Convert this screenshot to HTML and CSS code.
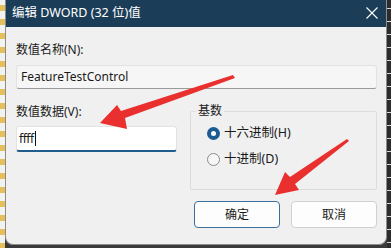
FILE: index.html
```html
<!DOCTYPE html>
<html lang="zh-CN">
<head>
<meta charset="utf-8">
<title>编辑 DWORD (32 位)值</title>
<link rel="stylesheet" href="styles.css">
</head>
<body>
<div class="screen">
  <div class="strip-left"></div>
  <div class="dialog">
    <div class="titlebar">
      <span class="title">编辑 DWORD (32 位)值</span>
      <svg class="close" width="12" height="12" viewBox="0 0 12 12"><path d="M0.5 0.5 L11.5 11.5 M11.5 0.5 L0.5 11.5" stroke="#ffffff" stroke-width="1.1" fill="none"/></svg>
    </div>
    <div class="content">
      <div class="label">数值名称(N):</div>
      <div class="field field-readonly">FeatureTestControl</div>
      <div class="row">
        <div class="col-left">
          <div class="label">数值数据(V):</div>
          <div class="field field-edit">ffff<span class="caret"></span></div>
        </div>
        <fieldset class="group">
          <legend class="legend">基数</legend>
          <div class="radio"><span class="dot dot-on"></span><span>十六进制(H)</span></div>
          <div class="radio"><span class="dot"></span><span>十进制(D)</span></div>
        </fieldset>
      </div>
      <div class="buttons">
        <div class="btn btn-primary">确定</div>
        <div class="btn">取消</div>
      </div>
    </div>
  </div>
  <div class="strip-right"></div>
  <svg class="arrows" width="391" height="248" viewBox="0 0 391 248">
    <polygon fill="#ea2f2f" points="100,123 117,105 121,111 233,75 235,78 125,118 127,129"/>
    <polygon fill="#ea2f2f" points="275,195 285,172 290,177 347,139 349,141 295,184 299,190"/>
  </svg>
</div>
</body>
</html>
```

FILE: styles.css
```css
* { box-sizing: border-box; }
html, body { margin: 0; padding: 0; }
body {
  width: 391px;
  height: 248px;
  overflow: hidden;
  font-family: "Segoe UI", "Noto Sans", "Noto Sans CJK SC", sans-serif;
  font-size: 12px;
  line-height: 16px;
  color: #1a1a1a;
  background: #3a3a3a;
}
.screen {
  position: relative;
  display: flex;
  width: 391px;
  height: 248px;
}
.strip-left {
  width: 5px;
  height: 248px;
  background:
    repeating-linear-gradient(to bottom, #f2f2f2 0 5px, #e5bf5c 5px 11px, #f2f2f2 11px 14px);
}
.strip-right {
  width: 4px;
  height: 248px;
  background:
    repeating-linear-gradient(to bottom, #2c2c2c 0 8px, #d8d8d8 8px 9px, #2c2c2c 9px 13px);
}
.dialog {
  width: 382px;
  height: 245px;
  background: #f0f0f0;
  border: 1px solid #8c8c8c;
  border-top: none;
  border-radius: 0 0 8px 8px;
  display: flex;
  flex-direction: column;
  overflow: hidden;
}
.titlebar {
  height: 27px;
  background: #1c3d57;
  color: #ffffff;
  display: flex;
  align-items: center;
  justify-content: space-between;
  padding: 0 8px 1px 7px;
  margin: 0 -1px;
}
.title { font-size: 12.5px; }
.close { margin-right: 1px; }
.content {
  padding: 15px 9px 0 10px;
  display: flex;
  flex-direction: column;
}
.label { height: 16px; }
.field {
  height: 24px;
  margin-top: 7px;
  padding: 0 4px;
  display: flex;
  align-items: center;
  border: 1px solid #e2e2e2;
  border-radius: 3px;
}
.field-readonly {
  background: #f6f6f6;
  border-bottom-color: #9a9a9a;
}
.row {
  display: flex;
  gap: 13px;
  margin-top: 15px;
}
.col-left { width: 161px; }
.field-edit {
  height: 26px;
  margin-top: 6px;
  background: #ffffff;
  border-bottom: 2px solid #1f5e8c;
  padding-left: 2px;
  letter-spacing: -0.5px;
}
.caret {
  display: inline-block;
  width: 1px;
  height: 15px;
  background: #111;
  margin-left: 1px;
}
.group {
  width: 187px;
  height: 86px;
  margin: 0;
  padding: 7px 5px 0 16px;
  border: 1px solid #dcdcdc;
  border-radius: 2px;
}
.legend {
  padding: 0 2px;
  margin-left: -11px;
  line-height: 14px;
}
.radio {
  display: flex;
  align-items: center;
  gap: 4px;
  height: 16px;
  margin-bottom: 10px;
  font-size: 12.5px;
}
.dot {
  width: 13px;
  height: 13px;
  border-radius: 50%;
  border: 1px solid #8a8a8a;
  background: #f7f7f7;
}
.dot-on {
  border: 4px solid #1d5c93;
  background: #ffffff;
}
.buttons {
  display: flex;
  justify-content: flex-end;
  gap: 11px;
  margin-top: 11px;
}
.btn {
  width: 86px;
  height: 27px;
  display: flex;
  align-items: center;
  justify-content: center;
  background: #fdfdfd;
  border: 1px solid #d0d0d0;
  border-radius: 4px;
}
.btn-primary { border-color: #3b6f9c; }
.arrows {
  position: absolute;
  left: 0;
  top: 0;
  pointer-events: none;
}
```
